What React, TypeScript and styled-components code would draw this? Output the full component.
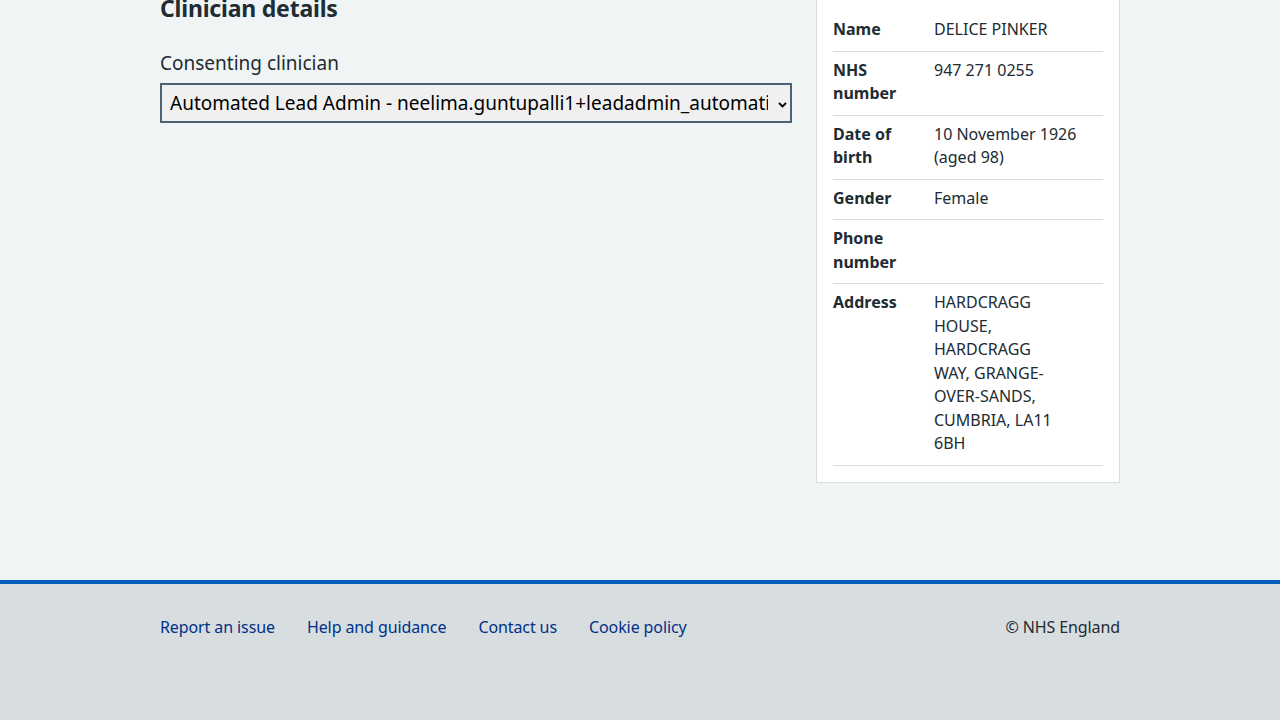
import React from "react";
import styled, { createGlobalStyle } from "styled-components";

const Global = createGlobalStyle`
  html, body { margin: 0; padding: 0; }
  body {
    background: #f0f4f5;
    font-family: "Noto Sans", Arial, sans-serif;
    color: #212b32;
  }
`;

const Page = styled.div`
  display: flex;
  flex-direction: column;
  min-height: 720px;
`;

const Main = styled.main`
  width: 960px;
  margin: 0 auto;
  padding-bottom: 96px;
  display: grid;
  grid-template-columns: 632px 304px;
  column-gap: 24px;
  align-items: start;
`;

const Column = styled.div`
  display: flex;
  flex-direction: column;
`;

const Heading = styled.h2`
  margin: -8px 0 0;
  font-size: 23px;
  letter-spacing: -0.2px;
  line-height: 32px;
  font-weight: 700;
`;

const Label = styled.label`
  margin-top: 25px;
  font-size: 19px;
  line-height: 28px;
`;

const SelectWrap = styled.div`
  position: relative;
  margin-top: 6px;
  width: 632px;
`;

const Select = styled.select`
  appearance: none;
  -webkit-appearance: none;
  display: block;
  height: 40px;
  width: 100%;
  box-sizing: border-box;
  border: 2px solid #4c6272;
  border-radius: 0;
  background: #f0f0f0;
  color: #000;
  font-family: inherit;
  font-size: 19px;
  padding: 0 22px 0 8px;
`;

const Chevron = styled.svg`
  position: absolute;
  right: 5px;
  top: 50%;
  margin-top: -1px;
  width: 9px;
  height: 6px;
  pointer-events: none;
`;

const Card = styled.section`
  margin-top: -6px;
  background: #fff;
  border: 1px solid #d8dde0;
  padding: 16px;
`;

const Row = styled.div`
  display: grid;
  grid-template-columns: 101px 150px 1fr;
  border-bottom: 1px solid #d8dde0;
  padding: 7px 0 9px;
  font-size: 16px;
  line-height: 23.5px;
`;

const Key = styled.dt`
  margin: 0;
  font-weight: 700;
  padding-right: 24px;
`;

const Value = styled.dd`
  margin: 0;
`;

const Footer = styled.footer`
  margin-top: auto;
  background: #d8dde0;
  border-top: 4px solid #005eb8;
  padding: 31px 0 81px;
`;

const FooterInner = styled.div`
  width: 960px;
  margin: 0 auto;
  display: flex;
  justify-content: space-between;
  align-items: center;
  font-size: 16px;
  line-height: 24px;
  letter-spacing: -0.1px;
`;

const Links = styled.ul`
  display: flex;
  gap: 32px;
  list-style: none;
  margin: 0;
  padding: 0;
`;

const FooterLink = styled.a`
  color: #003087;
  text-decoration: none;
`;

const Copy = styled.p`
  margin: 0;
  color: #212b32;
`;

const details: [string, string[]][] = [
  ["Name", ["DELICE PINKER"]],
  ["NHS number", ["947 271 0255"]],
  ["Date of birth", ["10 November 1926 (aged 98)"]],
  ["Gender", ["Female"]],
  ["Phone number", []],
  [
    "Address",
    ["HARDCRAGG", "HOUSE,", "HARDCRAGG", "WAY, GRANGE-", "OVER-SANDS,", "CUMBRIA, LA11", "6BH"],
  ],
];

export default function App() {
  return (
    <Page>
      <Global />
      <Main>
        <Column>
          <Heading>Clinician details</Heading>
          <Label htmlFor="clin">Consenting clinician</Label>
          <SelectWrap>
            <Select id="clin" defaultValue="a">
              <option value="a">
                Automated Lead Admin - neelima.guntupalli1+leadadmin_automation@nhs.net
              </option>
            </Select>
            <Chevron viewBox="0 0 9 6" aria-hidden="true">
              <path d="M1 1 L4.5 4.5 L8 1" fill="none" stroke="#000" strokeWidth="1.8" />
            </Chevron>
          </SelectWrap>
        </Column>
        <Card>
          <dl style={{ margin: 0 }}>
            {details.map(([k, lines]) => (
              <Row key={k}>
                <Key>{k}</Key>
                <Value>
                  {lines.length > 1
                    ? lines.map((l, i) => (
                        <React.Fragment key={i}>
                          {l}
                          {i < lines.length - 1 && <br />}
                        </React.Fragment>
                      ))
                    : lines[0]}
                </Value>
              </Row>
            ))}
          </dl>
        </Card>
      </Main>
      <Footer>
        <FooterInner>
          <Links>
            <li><FooterLink href="#">Report an issue</FooterLink></li>
            <li><FooterLink href="#">Help and guidance</FooterLink></li>
            <li><FooterLink href="#">Contact us</FooterLink></li>
            <li><FooterLink href="#">Cookie policy</FooterLink></li>
          </Links>
          <Copy>© NHS England</Copy>
        </FooterInner>
      </Footer>
    </Page>
  );
}
